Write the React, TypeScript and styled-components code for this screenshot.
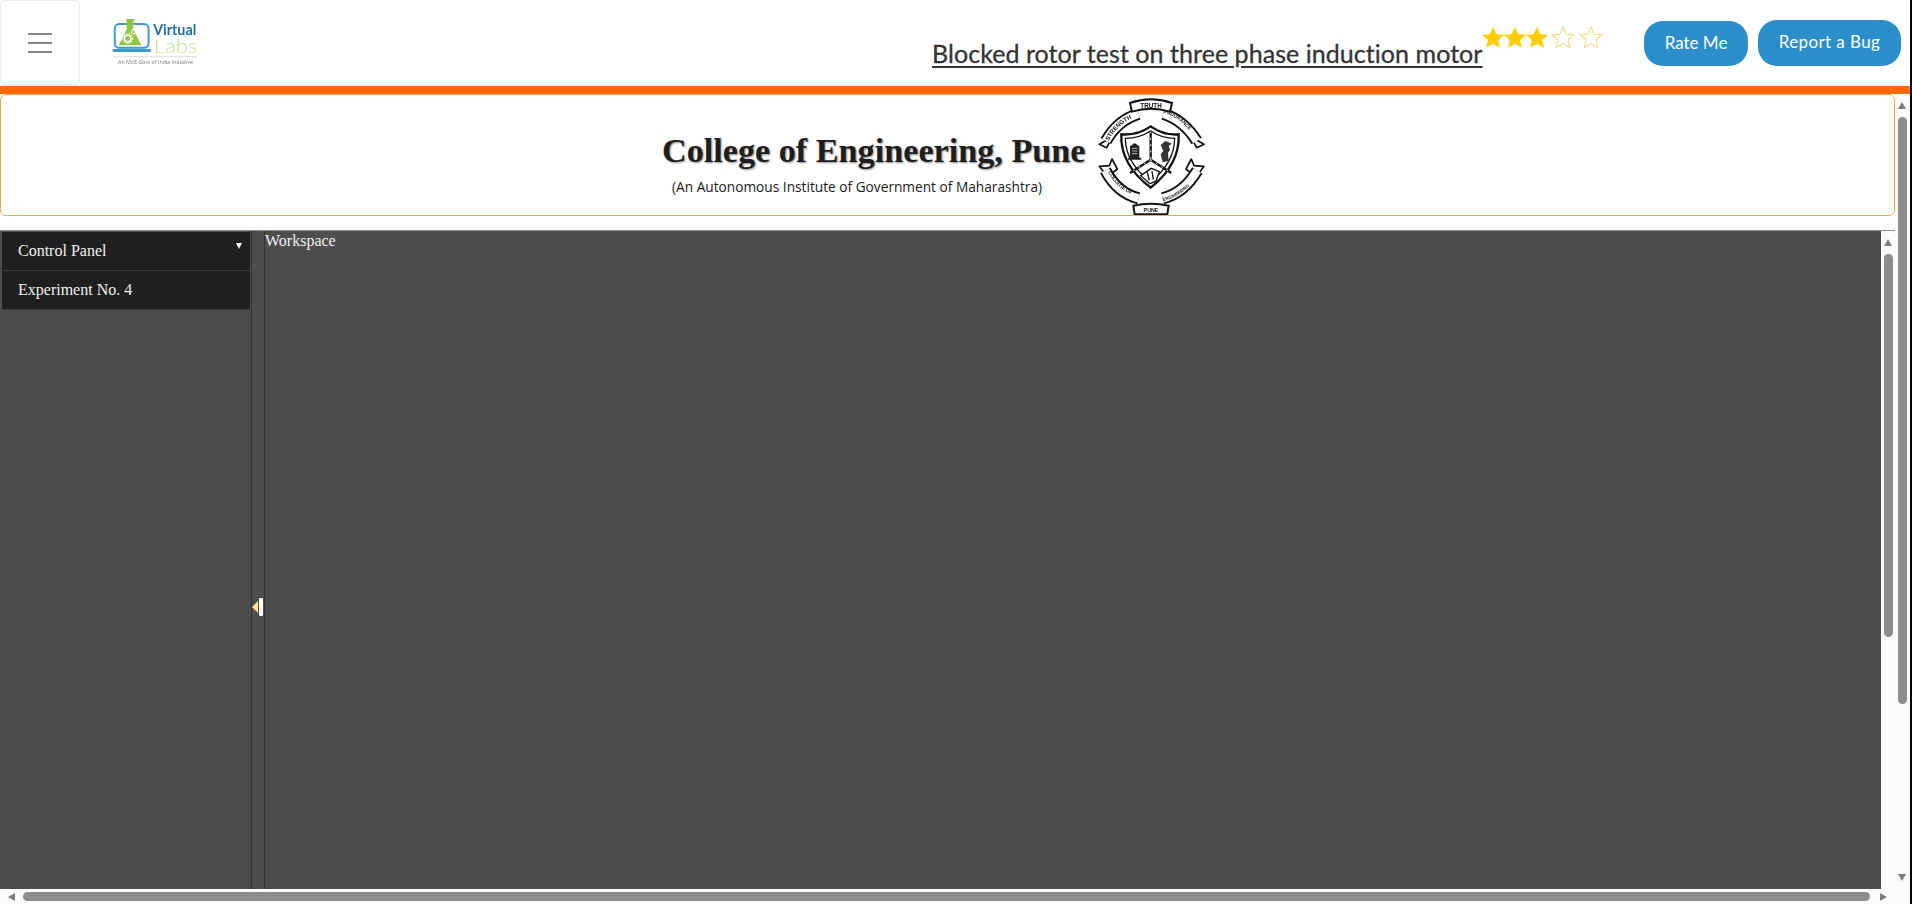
import styled, { createGlobalStyle } from 'styled-components';

const GlobalStyle = createGlobalStyle`
  html, body {
    margin: 0;
    padding: 0;
    overflow: hidden;
    background: #ffffff;
  }
`;

const Page = styled.div`
  width: 1912px;
  height: 904px;
  box-sizing: border-box;
  border-right: 2px solid #000000;
  display: flex;
  flex-direction: column;
  overflow: hidden;
  background: #ffffff;
`;

const Header = styled.header`
  height: 86px;
  flex: none;
  display: flex;
  align-items: flex-start;
`;

const MenuButton = styled.button`
  width: 80px;
  height: 85px;
  flex: none;
  box-sizing: border-box;
  padding: 0;
  background: #ffffff;
  border: 1px solid #ececec;
  border-radius: 5px;
  display: flex;
  flex-direction: column;
  align-items: center;
  justify-content: center;
  gap: 7px;
`;

const MenuLine = styled.span`
  display: block;
  width: 24px;
  height: 2px;
  background: #858585;
`;

const Logo = styled.svg`
  flex: none;
  width: 87px;
  height: 48px;
  margin: 18px 0 0 32px;
  filter: blur(0.35px);
`;

const Title = styled.h1`
  margin: 37px 0 0 733px;
  flex: none;
  width: 550px;
  white-space: nowrap;
  font-family: 'Lato', sans-serif;
  font-size: 25px;
  font-weight: 400;
  letter-spacing: 0.05px;
  line-height: 32px;
  color: #333333;
  -webkit-text-stroke: 0.3px #333333;
  text-decoration: underline;
  text-decoration-thickness: 2px;
  text-underline-offset: 3px;
`;

const Stars = styled.div`
  display: flex;
  flex: none;
  width: 162px;
  margin-top: 27px;
`;

const Star = styled.svg<{ $empty?: boolean; $gap?: number }>`
  width: 22px;
  height: 21px;
  flex: none;
  fill: ${(p) => (p.$empty ? '#ffffff' : '#ffcc00')};
  stroke: ${(p) => (p.$empty ? '#f3d978' : '#ffdb4d')};
  stroke-width: ${(p) => (p.$empty ? 1 : 0.5)};
  margin-left: ${(p) => p.$gap ?? 0}px;
  overflow: visible;
`;

const Buttons = styled.div`
  display: flex;
  gap: 10px;
  margin-top: 20px;
`;

const ActionButton = styled.button<{ $wide?: boolean }>`
  width: ${(p) => (p.$wide ? '143px' : '104px')};
  height: ${(p) => (p.$wide ? '46px' : '45px')};
  margin-top: ${(p) => (p.$wide ? '0' : '1px')};
  padding: 0 0 3px;
  border: none;
  border-radius: 19px;
  background: #2b8ecb;
  color: #ffffff;
  font-family: 'Lato', sans-serif;
  font-size: 17px;
  font-weight: 400;
  letter-spacing: ${(p) => (p.$wide ? '0.4px' : '0')};
`;

const OrangeBar = styled.div`
  height: 8px;
  flex: none;
  background: #ff6a00;
`;

const Below = styled.div`
  flex: 1;
  min-height: 0;
  display: flex;
`;

const Content = styled.div`
  width: 1895px;
  flex: none;
  display: flex;
  flex-direction: column;
`;

const Banner = styled.section`
  height: 122px;
  flex: none;
  box-sizing: border-box;
  margin-bottom: 14px;
  border: 1px solid #e6a94e;
  border-radius: 6px;
  display: flex;
  justify-content: center;
  align-items: center;
  padding-right: 28px;
`;

const CollegeName = styled.div`
  width: 436px;
  display: flex;
  flex-direction: column;
  align-items: flex-start;
  padding-top: 18px;
`;

const CollegeTitle = styled.div`
  font-family: 'Liberation Serif', serif;
  font-size: 34.2px;
  font-weight: 700;
  line-height: 40px;
  white-space: nowrap;
  color: #1e1e1e;
  text-shadow: 1px 1px 2px #8a8a8a;
`;

const CollegeNote = styled.div`
  margin: 6px 0 0 10px;
  font-family: 'Open Sans', sans-serif;
  font-size: 13.7px;
  line-height: 20px;
  white-space: nowrap;
  color: #1a1a1a;
`;

const Crest = styled.svg`
  flex: none;
  width: 107px;
  height: 117px;
  margin-top: 2px;
  filter: blur(0.3px);
`;

const WorkRow = styled.div`
  height: 659px;
  flex: none;
  display: flex;
  border-top: 1px solid #8c8c8c;
  box-sizing: border-box;
`;

const Sidebar = styled.aside`
  width: 252px;
  flex: none;
  box-sizing: border-box;
  padding: 1px 0 0 2px;
  background: #4d4d4d;
  border-left: 1px solid #3c3c3c;
  margin-left: -1px;
`;

const SidebarItem = styled.div`
  position: relative;
  width: 248px;
  height: 38px;
  box-sizing: border-box;
  margin-bottom: 1px;
  padding-left: 16px;
  background: #1f1f1f;
  font-family: 'Liberation Serif', serif;
  font-size: 16px;
  line-height: 38px;
  color: #f0f0f0;
  box-shadow: 0 1px 0 #383838;
`;

const ItemCaret = styled.span`
  position: absolute;
  top: 11px;
  right: 8px;
  width: 0;
  height: 0;
  border-left: 3.5px solid transparent;
  border-right: 3.5px solid transparent;
  border-top: 6px solid #f5f5f5;
`;

const Splitter = styled.div`
  width: 14px;
  flex: none;
  box-sizing: border-box;
  background: #4d4d4d;
  border-left: 1px solid #333333;
  border-right: 1px solid #333333;
  display: flex;
  align-items: center;
`;

const SplitHandle = styled.div`
  display: flex;
  align-items: center;
  gap: 1px;
  margin-top: 94px;
`;

const HandleArrow = styled.span`
  width: 0;
  height: 0;
  border-top: 6px solid transparent;
  border-bottom: 6px solid transparent;
  border-right: 6px solid #ffe39a;
`;

const HandleBar = styled.span`
  width: 4px;
  height: 18px;
  background: #ffffff;
  border-radius: 1px;
`;

const Workspace = styled.main`
  flex: 1;
  background: #4d4d4d;
  font-family: 'Liberation Serif', serif;
  font-size: 16px;
  line-height: 20px;
  color: #f0f0f0;
`;

const VTrack = styled.div<{ $outer?: boolean }>`
  width: ${(p) => (p.$outer ? '15px' : '14px')};
  flex: none;
  box-sizing: border-box;
  padding: 8px 0 0 3px;
  background: #fbfbfb;
  display: flex;
  flex-direction: column;
  align-items: flex-start;
`;

const VThumb = styled.div<{ $length: number }>`
  width: 9px;
  height: ${(p) => p.$length}px;
  margin-top: 8px;
  background: #8c8c8c;
  border-radius: 5px;
`;

const UpArrow = styled.span`
  width: 0;
  height: 0;
  border-left: 4.5px solid transparent;
  border-right: 4.5px solid transparent;
  border-bottom: 7px solid #7d7d7d;
`;

const DownArrow = styled.span`
  margin-top: 170px;
  width: 0;
  height: 0;
  border-left: 4.5px solid transparent;
  border-right: 4.5px solid transparent;
  border-top: 7px solid #7d7d7d;
`;

const HTrack = styled.div`
  height: 15px;
  flex: none;
  box-sizing: border-box;
  padding-left: 8px;
  background: #fbfbfb;
  display: flex;
  align-items: center;
`;

const HThumb = styled.div`
  width: 1847px;
  height: 9px;
  margin: 0 10px 0 8px;
  flex: none;
  background: #8c8c8c;
  border-radius: 5px;
`;

const LeftArrow = styled.span`
  width: 0;
  height: 0;
  border-top: 4.5px solid transparent;
  border-bottom: 4.5px solid transparent;
  border-right: 7px solid #7d7d7d;
`;

const RightArrow = styled.span`
  width: 0;
  height: 0;
  border-top: 4.5px solid transparent;
  border-bottom: 4.5px solid transparent;
  border-left: 7px solid #7d7d7d;
`;

const STAR_PATH = 'M12 1.5l3.1 7 7.4.7-5.6 5 1.7 7.4L12 17.7l-6.6 3.9 1.7-7.4-5.6-5 7.4-.7z';

function LabsLogo() {
  return (
    <Logo viewBox="335 55 260 145">
      <rect x="342" y="73" width="102" height="72" rx="13" fill="none" stroke="#3d9bd1" strokeWidth="6" />
      <rect x="335" y="149" width="117" height="9" rx="4" fill="#3d9bd1" />
      <path d="M376 58h26v5h-4v26l24 48H354l24-48V63h-2z" fill="#8fc640" />
      <circle cx="381" cy="117" r="10" fill="none" stroke="#ffffff" strokeWidth="5" />
      <circle cx="381" cy="117" r="15" fill="none" stroke="#ffffff" strokeWidth="4" strokeDasharray="4 4" />
      <circle cx="400" cy="96" r="6" fill="none" stroke="#ffffff" strokeWidth="3" />
      <circle cx="400" cy="96" r="9" fill="none" stroke="#ffffff" strokeWidth="2" strokeDasharray="3 3" />
      <text x="458" y="107" fontFamily="Lato, sans-serif" fontSize="46" fontWeight="700" fill="#1e6ca6" textLength="130" lengthAdjust="spacingAndGlyphs">
        Virtual
      </text>
      <text x="460" y="160" fontFamily="Lato, sans-serif" fontSize="58" fontWeight="300" fill="#c4e09a" textLength="132" lengthAdjust="spacingAndGlyphs">
        Labs
      </text>
      <path d="M338 172h252" stroke="#c9c9c9" strokeWidth="2" />
      <text x="352" y="193" fontFamily="Open Sans, sans-serif" fontSize="14" fill="#777777" textLength="226" lengthAdjust="spacingAndGlyphs">
        An MoE Govt of India Initiative
      </text>
    </Logo>
  );
}

function CollegeCrest() {
  return (
    <Crest viewBox="54 21 321 351">
      <defs>
        <path id="strength" d="M86 150Q116 92 176 74" />
        <path id="endurance" d="M250 64Q312 84 346 146" />
        <path id="collegeof" d="M84 244Q116 300 176 318" />
        <path id="engineering" d="M250 330Q316 312 352 254" />
      </defs>
      <g fill="#ffffff" stroke="#111111" strokeWidth="5" strokeLinejoin="round">
        <path d="M58 160l24-14 4-26 24-6-30 56z" />
        <path d="M372 160l-24-14-4-26-24-6 30 56z" />
        <path d="M58 226l30-2 8-20 16 30-30 24z" />
        <path d="M372 226l-30-2-8-20-16 30 30 24z" />
      </g>
      <g fill="none">
        <path d="M78 150Q112 88 176 68" stroke="#111111" strokeWidth="36" />
        <path d="M78 150Q112 88 176 68" stroke="#ffffff" strokeWidth="25" />
        <path d="M250 68Q312 88 350 150" stroke="#111111" strokeWidth="36" />
        <path d="M250 68Q312 88 350 150" stroke="#ffffff" strokeWidth="25" />
        <path d="M76 238Q112 306 176 322" stroke="#111111" strokeWidth="36" />
        <path d="M76 238Q112 306 176 322" stroke="#ffffff" strokeWidth="25" />
        <path d="M248 322Q312 306 352 238" stroke="#111111" strokeWidth="36" />
        <path d="M248 322Q312 306 352 238" stroke="#ffffff" strokeWidth="25" />
      </g>
      <g fontFamily="Liberation Sans, sans-serif" fontSize="18" fontWeight="700" fill="#111111">
        <text>
          <textPath href="#strength">STRENGTH</textPath>
        </text>
        <text fontSize="15">
          <textPath href="#endurance">ENDURANCE</textPath>
        </text>
        <text fontSize="15">
          <textPath href="#collegeof">COLLEGE OF</textPath>
        </text>
        <text fontSize="13">
          <textPath href="#engineering">ENGINEERING</textPath>
        </text>
      </g>
      <path d="M150 36Q212 14 276 36L270 62Q212 44 156 62z" fill="#ffffff" stroke="#111111" strokeWidth="6" />
      <text x="213" y="50" textAnchor="middle" fontFamily="Liberation Sans, sans-serif" fontSize="19" fontWeight="700" fill="#111111">
        TRUTH
      </text>
      <path d="M160 344Q212 332 266 344L262 370H164z" fill="#ffffff" stroke="#111111" strokeWidth="6" />
      <text x="213" y="362" textAnchor="middle" fontFamily="Liberation Sans, sans-serif" fontSize="16" fontWeight="700" fill="#111111">
        PUNE
      </text>
      <path d="M212 106Q172 134 124 130Q120 220 212 290Q300 220 296 130Q252 134 212 106z" fill="#ffffff" stroke="#111111" strokeWidth="7" />
      <path d="M212 120Q178 142 136 142Q136 214 212 274Q284 214 284 142Q246 142 212 120z" fill="none" stroke="#111111" strokeWidth="4" />
      <path d="M212 122V206M212 206L150 246M212 206L274 246" fill="none" stroke="#111111" strokeWidth="7" />
      <path d="M212 122V206M212 206L150 246M212 206L274 246" fill="none" stroke="#ffffff" strokeWidth="3" strokeDasharray="5 14" />
      <path d="M150 200v-34l14-10 14 10v34zM144 200h40v6h-40z" fill="#222222" />
      <path d="M156 172h16M156 180h16M156 188h16" stroke="#ffffff" strokeWidth="2" />
      <path d="M248 214l-6-24 8-10-8-18 14-12 20 8-10 6 4 12-6 10 2 24z" fill="#333333" />
      <path d="M182 254l32-22 24 10-10 28-18 8z" fill="#ffffff" stroke="#111111" strokeWidth="4" />
      <path d="M202 244l6 24M216 240l4 26" stroke="#111111" strokeWidth="4" />
    </Crest>
  );
}

export default function App() {
  return (
    <Page>
      <GlobalStyle />
      <Header>
        <MenuButton aria-label="Menu">
          <MenuLine />
          <MenuLine />
          <MenuLine />
        </MenuButton>
        <LabsLogo />
        <Title>Blocked rotor test on three phase induction motor</Title>
        <Stars>
          {[0, 1, 2].map((i) => (
            <Star key={i} viewBox="1.5 1.5 21 20.5">
              <path d={STAR_PATH} />
            </Star>
          ))}
          <Star $empty $gap={4} viewBox="1.5 1.5 21 20.5">
            <path d={STAR_PATH} />
          </Star>
          <Star $empty $gap={6} viewBox="1.5 1.5 21 20.5">
            <path d={STAR_PATH} />
          </Star>
        </Stars>
        <Buttons>
          <ActionButton>Rate Me</ActionButton>
          <ActionButton $wide>Report a Bug</ActionButton>
        </Buttons>
      </Header>
      <OrangeBar />
      <Below>
        <Content>
          <Banner>
            <CollegeName>
              <CollegeTitle>College of Engineering, Pune</CollegeTitle>
              <CollegeNote>(An Autonomous Institute of Government of Maharashtra)</CollegeNote>
            </CollegeName>
            <CollegeCrest />
          </Banner>
          <WorkRow>
            <Sidebar>
              <SidebarItem>
                Control Panel
                <ItemCaret />
              </SidebarItem>
              <SidebarItem>Experiment No. 4</SidebarItem>
            </Sidebar>
            <Splitter>
              <SplitHandle>
                <HandleArrow />
                <HandleBar />
              </SplitHandle>
            </Splitter>
            <Workspace>Workspace</Workspace>
            <VTrack>
              <UpArrow />
              <VThumb $length={383} />
            </VTrack>
          </WorkRow>
          <HTrack>
            <LeftArrow />
            <HThumb />
            <RightArrow />
          </HTrack>
        </Content>
        <VTrack $outer>
          <UpArrow />
          <VThumb $length={587} />
          <DownArrow />
        </VTrack>
      </Below>
    </Page>
  );
}
